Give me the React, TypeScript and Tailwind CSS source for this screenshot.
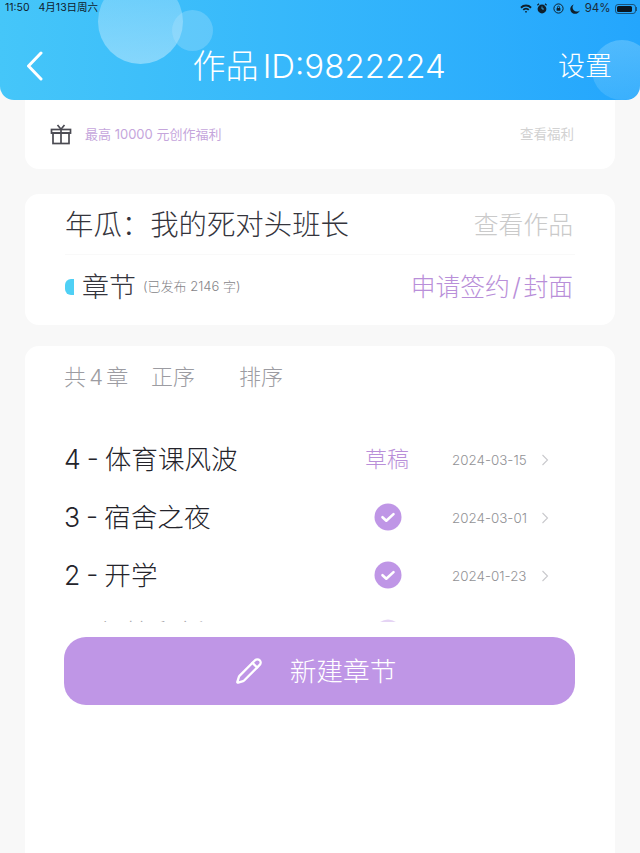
import { Pencil } from "lucide-react";

const font = "font-['Inter','Noto_Sans_CJK_SC',sans-serif]";

const chapters = [
  { title: "4 - 体育课风波", date: "2024-03-15", draft: true },
  { title: "3 - 宿舍之夜", date: "2024-03-01", draft: false },
  { title: "2 - 开学", date: "2024-01-23", draft: false },
  { title: "1 - 相拉和新", date: "2024-01-20", draft: false },
];

function CheckBadge() {
  return (
    <svg width="28" height="28" viewBox="0 0 28 28">
      <circle cx="14" cy="14" r="13.5" fill="#bf96e6" />
      <path d="M8.5 14.2l3.8 3.5 7.2-6.6" fill="none" stroke="#fff" strokeWidth="2.6" strokeLinecap="round" strokeLinejoin="round" />
    </svg>
  );
}

function StatusIcons() {
  return (
    <div className="flex items-center text-[11.5px] leading-none text-[#1a2a3a]">
      <svg width="12" height="9" viewBox="0 0 12 9" className="mr-[5px]">
        <path d="M0.3 3A8 8 0 0 1 11.7 3L10.4 4.4A6 6 0 0 0 1.6 4.4Z" fill="#10202c" />
        <path d="M2.6 5.3A4.6 4.6 0 0 1 9.4 5.3L8.1 6.6A2.8 2.8 0 0 0 3.9 6.6Z" fill="#10202c" />
        <path d="M4.8 7.5A1.7 1.7 0 0 1 7.2 7.5L6 8.9Z" fill="#10202c" />
      </svg>
      <svg width="10" height="11" viewBox="0 0 10 11" className="mr-[6px]">
        <circle cx="5" cy="6" r="4.4" fill="#10202c" />
        <path d="M0.4 2.2L2 0.7M9.6 2.2L8 0.7" stroke="#10202c" strokeWidth="1.2" />
        <path d="M5 3.5V6H7" stroke="#3dbdf5" strokeWidth="0.8" fill="none" />
      </svg>
      <svg width="11" height="11" viewBox="0 0 11 11" className="mr-[6px]">
        <circle cx="5.5" cy="5.5" r="4.6" fill="none" stroke="#10202c" strokeWidth="1" />
        <rect x="3.6" y="5" width="3.8" height="2.8" rx="0.5" fill="#10202c" />
        <path d="M4.5 5V4.2A1 1 0 0 1 6.5 4.2V5" fill="none" stroke="#10202c" strokeWidth="0.8" />
      </svg>
      <svg width="10" height="10" viewBox="0 0 10 10" className="mr-[5px]">
        <path d="M3.8 0.4A4.8 4.8 0 1 0 9.7 6.4 4.2 4.2 0 0 1 3.8 0.4Z" fill="#10202c" />
      </svg>
      <span className="mr-[4px]">94%</span>
      <div className="flex items-center">
        <div className="h-[10px] w-[21px] rounded-[3px] border border-[#10202c]/60 p-[1px]">
          <div className="h-full w-[90%] rounded-[1.5px] bg-[#0a1620]" />
        </div>
        <div className="ml-[0.5px] h-[4px] w-[1px] bg-[#10202c]/60" />
      </div>
    </div>
  );
}

export default function App() {
  return (
    <div className={`${font} flex h-[853px] w-[640px] flex-col overflow-hidden bg-[#f8f8f8]`}>
      <header className="relative z-10 h-[100px] shrink-0 overflow-hidden rounded-b-[14px] bg-gradient-to-r from-[#45c6f9] to-[#24a6fd]">
        <div className="absolute left-[98px] top-[-21px] h-[85px] w-[85px] rounded-full bg-gradient-to-b from-[#b5e6fd]/35 to-[#b5e6fd]/60" />
        <div className="absolute left-[172px] top-[10px] h-[41px] w-[41px] rounded-full bg-[#b5e6fd]/30" />
        <div className="absolute left-[592px] top-[40px] h-[60px] w-[60px] rounded-full bg-gradient-to-b from-[#b5e6fd]/30 to-[#b5e6fd]/15" />

        <div className="relative flex h-[16px] items-center justify-between pl-[5px] pr-[3px] pt-[1px]">
          <div className="flex gap-[9px] text-[10.5px] leading-none text-[#10202c]">
            <span>11:50</span>
            <span>4月13日周六</span>
          </div>
          <StatusIcons />
        </div>

        <div className="relative flex h-[84px] items-center pl-[26px] pr-[28px] pt-[16px] text-white">
          <div className="flex-1">
            <svg width="17" height="30" viewBox="0 0 17 30">
              <path d="M15 2L2.5 15 15 28" fill="none" stroke="#fff" strokeWidth="3" strokeLinecap="round" strokeLinejoin="round" />
            </svg>
          </div>
          <h1 className="text-[33px] font-light leading-none [word-spacing:-5px]">作品 ID:9822224</h1>
          <div className="flex flex-1 justify-end">
            <span className="text-[27px] font-light leading-none">设置</span>
          </div>
        </div>
      </header>

      <main className="flex flex-1 flex-col px-[25px]">
        <section className="flex h-[69px] items-center rounded-b-[14px] bg-white pl-[25px] pr-[41px]">
          <svg width="22" height="22" viewBox="0 0 22 22" className="mb-[1px]" fill="none" stroke="#4a4a52" strokeWidth="1.7">
            <rect x="1.5" y="6.5" width="19" height="3.6" />
            <rect x="3" y="10" width="16" height="10.5" />
            <path d="M11 6.5V20.5M7.5 2l3.5 4.2L14.5 2" />
          </svg>
          <span className="ml-[13px] text-[13px] text-[#c5a6dc]">最高 10000 元创作福利</span>
          <span className="ml-auto text-[13.5px] text-[#d2d2d2]">查看福利</span>
        </section>

        <section className="mt-[25px] h-[131px] rounded-[14px] bg-white px-[40px]">
          <div className="flex h-[61px] items-center justify-between border-b border-[#f9f9f9] pt-[2px]">
            <span className="text-[28.4px] font-light leading-none text-[#34343c]">年瓜：我的死对头班长</span>
            <span className="mr-[2px] text-[24.8px] font-light leading-none text-[#cacaca]">查看作品</span>
          </div>
          <div className="flex h-[62px] items-center pt-[2px]">
            <div className="h-[16px] w-[9px] rounded-l-[6px] bg-[#4fd0f5]" />
            <span className="ml-[8px] text-[27px] font-light leading-none text-[#34343c]">章节</span>
            <span className="ml-[7px] text-[13px] font-light text-[#858589]">(已发布 2146 字)</span>
            <span className="ml-auto mr-[2px] text-[24.8px] font-light leading-none text-[#b98fd9] [word-spacing:-4.5px]">申请签约 / 封面</span>
          </div>
        </section>

        <section className="mt-[21px] flex-1 rounded-t-[14px] bg-white px-[39px]">
          <div className="flex h-[62px] items-center pb-[1px] text-[22px] font-light leading-none text-[#9c9ca2]">
            <span className="w-[87px] [word-spacing:-3px]">共 4 章</span>
            <span className="w-[88px]">正序</span>
            <span>排序</span>
          </div>
          <div className="h-[214px] overflow-hidden pt-[22px]">
            {chapters.map((c, i) => (
              <div key={c.title} className={`flex h-[58px] items-center ${i === 3 ? "opacity-40" : ""}`}>
                <span className="w-[281px] text-[26.6px] font-light leading-none text-[#24242b] [word-spacing:-1.5px]">{c.title}</span>
                <div className="flex w-[86px] justify-center">
                  {c.draft ? (
                    <span className="mr-[2px] text-[22px] font-light leading-none text-[#b98fd9]">草稿</span>
                  ) : (
                    <CheckBadge />
                  )}
                </div>
                <span className="ml-[21px] mt-[3px] w-[76px] text-[13.4px] font-light leading-none text-[#929296]">{c.date}</span>
                <svg width="8" height="12" viewBox="0 0 8 12" className="ml-[13px] mt-[1px]">
                  <path d="M1.5 1l5 5-5 5" fill="none" stroke="#c9c9cd" strokeWidth="1.1" />
                </svg>
              </div>
            ))}
          </div>
          <button className="mt-[15px] flex h-[68px] w-[511px] items-center justify-center rounded-[22px] bg-[#bf96e6] pr-[8px] text-[26.7px] font-light leading-none text-white">
            <Pencil size={28} strokeWidth={2} className="mr-[27px]" />
            新建章节
          </button>
        </section>
      </main>
    </div>
  );
}
